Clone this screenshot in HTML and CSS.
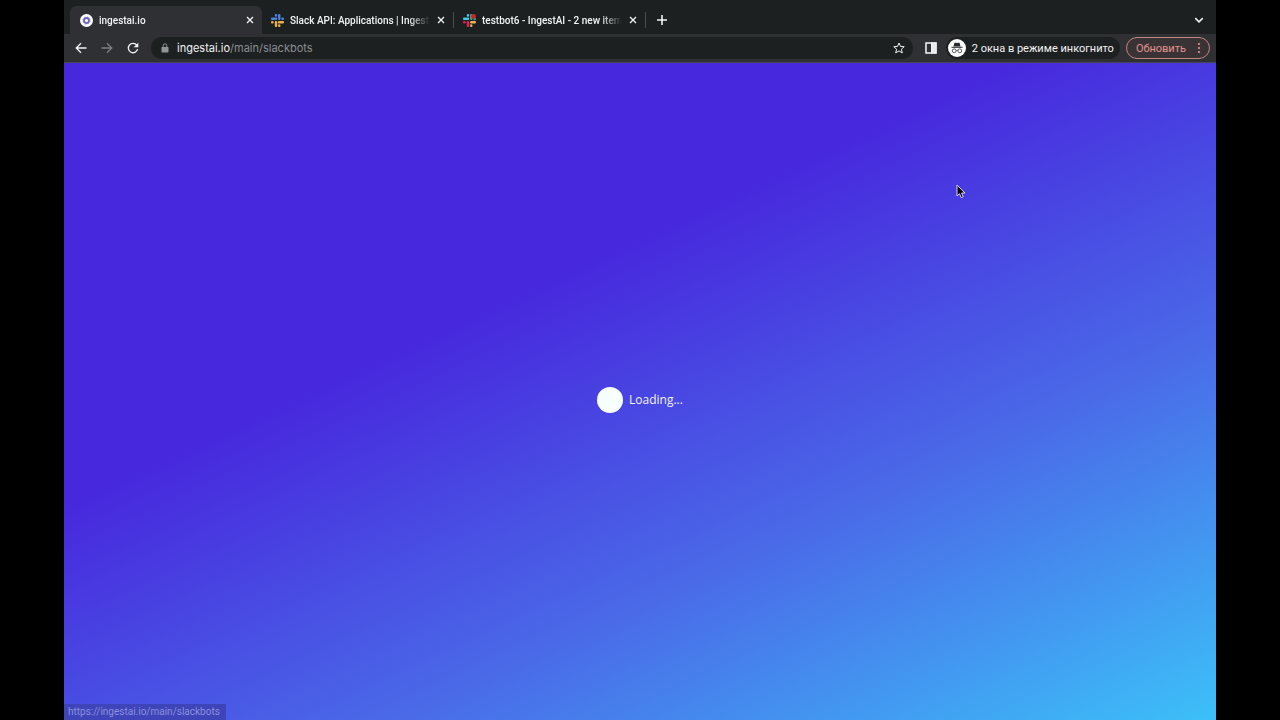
FILE: index.html
```
<!DOCTYPE html>
<html lang="en">
<head>
  <meta charset="UTF-8">
  <meta name="viewport" content="width=device-width, initial-scale=1.0">
  <title>ingestai.io</title>
  <link rel="stylesheet" href="styles.css">
</head>
<body>
  <div class="browser">
    <header class="tab-strip">
      <nav class="tabs">
        <div class="tab active">
          <svg class="favicon" viewBox="0 0 12 12">
            <circle cx="6" cy="6" r="6" fill="#fff"/>
            <circle cx="6" cy="6" r="2.3" fill="none" stroke="#7566bd" stroke-width="1.8"/>
            <circle cx="6" cy="6" r="3.4" fill="none" stroke="#8d80cc" stroke-width=".8" stroke-dasharray="1.3 1.37"/>
          </svg>
          <a class="tab-title" href="#">ingestai.io</a>
          <button class="close" aria-label="Close tab">
            <svg viewBox="0 0 8 8"><path d="M1 1l6 6M7 1L1 7"/></svg>
          </button>
        </div>
        <div class="tab">
          <svg class="favicon" viewBox="0 0 24 24">
            <g fill="#4a84e0">
              <rect x="7" y="0" width="4.500" height="5" rx="2"/>
              <rect x="0" y="6.500" width="11.500" height="4.500" rx="2"/>
              <rect x="13" y="0" width="4.500" height="11" rx="2"/>
              <rect x="19" y="6.500" width="5" height="4.500" rx="2"/>
            </g>
            <g fill="#ecb04a">
              <rect x="12.500" y="13" width="11.500" height="4.500" rx="2"/>
              <rect x="13" y="19" width="4.500" height="5" rx="2"/>
              <rect x="7" y="13" width="4.500" height="11" rx="2"/>
              <rect x="0" y="13" width="5" height="4.500" rx="2"/>
            </g>
          </svg>
          <a class="tab-title" href="#">Slack API: Applications | Ingest</a>
          <button class="close" aria-label="Close tab">
            <svg viewBox="0 0 8 8"><path d="M1 1l6 6M7 1L1 7"/></svg>
          </button>
        </div>
        <div class="tab">
          <svg class="favicon" viewBox="0 0 24 24">
            <g fill="#4cc4e8">
              <rect x="7" y="0" width="4.500" height="5" rx="2"/>
              <rect x="0" y="6.500" width="11.500" height="4.500" rx="2"/>
            </g>
            <g fill="#3aa67c">
              <rect x="13" y="0" width="4.500" height="11" rx="2"/>
              <rect x="19" y="7" width="5" height="4.500" rx="2"/>
            </g>
            <g fill="#e0245c">
              <rect x="7" y="13" width="4.500" height="11" rx="2"/>
              <rect x="0" y="13" width="5" height="4.500" rx="2"/>
            </g>
            <g fill="#ecb04a">
              <rect x="13" y="13" width="11" height="4.500" rx="2"/>
              <rect x="13" y="19" width="4.500" height="5" rx="2"/>
            </g>
            <circle cx="19.500" cy="4.500" r="4.500" fill="#d0222c"/>
          </svg>
          <a class="tab-title" href="#">testbot6 - IngestAI - 2 new item</a>
          <button class="close" aria-label="Close tab">
            <svg viewBox="0 0 8 8"><path d="M1 1l6 6M7 1L1 7"/></svg>
          </button>
        </div>
      </nav>
      <button class="new-tab" aria-label="New tab">
        <svg viewBox="0 0 10 10"><path d="M5 0v10M0 5h10"/></svg>
      </button>
      <button class="tab-search" aria-label="Search tabs">
        <svg viewBox="0 0 8 8"><path d="M1 2.500l3 3 3-3"/></svg>
      </button>
    </header>

    <div class="toolbar">
      <div class="nav-buttons">
        <button aria-label="Back">
          <svg viewBox="0 0 12 12"><path d="M11.500 6H1.500M6 1.200L1.200 6 6 10.800"/></svg>
        </button>
        <button aria-label="Forward" class="muted">
          <svg viewBox="0 0 12 12"><path d="M.5 6h10M6 1.200L10.800 6 6 10.800"/></svg>
        </button>
        <button aria-label="Reload">
          <svg viewBox="0 0 12 12">
            <path d="M9.800 3.200A4.700 4.700 0 1 0 10.600 7.200"/>
            <path d="M11.300.7v4.600H6.700z" class="solid"/>
          </svg>
        </button>
      </div>
      <form class="omnibox">
        <svg class="lock" viewBox="0 0 8 10">
          <rect x=".5" y="4" width="7" height="5.500" rx=".8" fill="#929598"/>
          <path d="M2.200 4.200V2.600a1.800 1.800 0 0 1 3.600 0v1.600" fill="none" stroke="#929598"/>
        </svg>
        <label class="host" for="address">ingestai.io</label>
        <input class="path" id="address" type="text" value="/main/slackbots">
        <button type="button" class="star" aria-label="Bookmark">
          <svg viewBox="0 0 12 12"><path d="M6 1l1.500 3.400 3.700.3-2.800 2.500.9 3.700L6 8.900l-3.300 2 .9-3.700L.8 4.700l3.700-.3z"/></svg>
        </button>
      </form>
      <button class="side-panel" aria-label="Side panel">
        <svg viewBox="0 0 12 12">
          <rect x="1" y="1" width="10" height="10" fill="none" stroke="#e8eaf0" stroke-width="1.600"/>
          <rect x="6.500" y="1" width="4.500" height="10" fill="#e8eaf0"/>
        </svg>
      </button>
      <button class="incognito">
        <svg viewBox="0 0 18 18">
          <circle cx="9" cy="9" r="9" fill="#fff"/>
          <path d="M6.400 4.200q.3-.8 1.100-.5l1.500.4 1.500-.4q.8-.3 1.100.5l1 3.200H5.400z" fill="#26292c"/>
          <path d="M3.500 8.300h11" stroke="#26292c"/>
          <g fill="none" stroke="#44474a" stroke-width=".9">
            <circle cx="6.200" cy="11.800" r="1.900"/>
            <circle cx="11.800" cy="11.800" r="1.900"/>
            <path d="M8.100 11.500q.9-.6 1.800 0"/>
          </g>
        </svg>
        <span>2 окна в режиме инкогнито</span>
      </button>
      <button class="update">
        <span>Обновить</span>
        <svg viewBox="0 0 4 12">
          <circle cx="2" cy="2" r="1.100"/>
          <circle cx="2" cy="6" r="1.100"/>
          <circle cx="2" cy="10" r="1.100"/>
        </svg>
      </button>
    </div>

    <main class="page">
      <div class="loader" role="status">
        <span class="dot"></span>
        <span>Loading...</span>
      </div>
      <div class="status-url">https://ingestai.io/main/slackbots</div>
      <svg class="cursor" viewBox="0 0 10 15">
        <path d="M1 1v11l2.500-2.300L5.200 13.600l2-.9L5.600 9H9z" fill="#08080c" stroke="#e8e6ff" stroke-width=".9"/>
      </svg>
    </main>
  </div>
</body>
</html>
```
FILE: styles.css
```
* {
  box-sizing: border-box;
}

body {
  margin: 0;
  padding: 0 5%;
  background: #000;
  color: #f1f3f4;
  font-family: Roboto, "Noto Sans", sans-serif;
  font-size: 11px;
}

.browser {
  min-height: 100vh;
  display: flex;
  flex-direction: column;
  background: #1d2021;
}

button {
  display: flex;
  align-items: center;
  justify-content: center;
  padding: 0;
  border: none;
  background: transparent;
  color: inherit;
  font: inherit;
  cursor: pointer;
}

button svg {
  fill: none;
  stroke: currentColor;
}

/* Tabs */
.tab-strip {
  display: flex;
  align-items: center;
  padding: 6px 12px 0 6px;
}

.tabs {
  display: flex;
}

.tab {
  width: 192px;
  height: 28px;
  display: flex;
  align-items: center;
  padding: 0 4px 0 9px;
}

.tab + .tab {
  border-right: 1px solid;
  border-image: linear-gradient(transparent 25%, #4b4e51 25%, #4b4e51 75%, transparent 75%) 1;
}

.tab.active {
  padding-left: 10px;
  background: #2e3034;
  border-radius: 6px 6px 0 0;
}

.favicon {
  width: 13px;
  height: 13px;
  flex: none;
}

.tab-title {
  flex: 1;
  margin-left: 6px;
  overflow: hidden;
  white-space: nowrap;
  color: inherit;
  font-size: 10px;
  font-weight: 500;
  text-decoration: none;
  mask-image: linear-gradient(to right, #000 85%, transparent);
}

.close {
  width: 16px;
  height: 16px;
  margin-left: 3px;
}

.close svg {
  width: 8px;
  height: 8px;
  stroke-width: 1.3;
}

.new-tab {
  width: 20px;
  height: 20px;
  margin-left: 6px;
}

.new-tab svg {
  width: 10px;
  height: 10px;
  stroke-width: 1.6;
}

.tab-search {
  margin-left: auto;
}

.tab-search svg {
  width: 10px;
  height: 10px;
  stroke-width: 1.2;
}

/* Toolbar */
.toolbar {
  height: 29px;
  display: flex;
  align-items: center;
  padding: 0 6px 0 11px;
  background: #2e3034;
  border-bottom: 1px solid #45464f;
}

.nav-buttons {
  display: flex;
  gap: 14px;
}

.nav-buttons svg {
  width: 12px;
  height: 12px;
  stroke-width: 1.3;
}

.nav-buttons .solid {
  fill: currentColor;
  stroke: none;
}

.nav-buttons .muted {
  color: #7c7f82;
}

.omnibox {
  flex: 1;
  height: 22px;
  display: flex;
  align-items: center;
  margin-left: 12px;
  padding: 0 8px 0 10px;
  border-radius: 11px;
  background: #1d2021;
  font-family: Inter, sans-serif;
  font-size: 11px;
}

.lock {
  width: 8px;
  height: 10px;
  margin-right: 8px;
}

.path {
  flex: 1;
  min-width: 0;
  padding: 0;
  border: none;
  outline: none;
  background: transparent;
  color: #8b8e91;
  font: inherit;
}

.star svg {
  width: 12px;
  height: 12px;
}

.side-panel {
  margin: 0 9px 0 12px;
}

.side-panel svg {
  width: 12px;
  height: 12px;
}

.incognito {
  height: 22px;
  gap: 6px;
  padding: 0 6px 0 2px;
  border-radius: 11px;
  background: #1d2021;
  white-space: nowrap;
}

.incognito svg {
  width: 18px;
  height: 18px;
  stroke: none;
}

.update {
  height: 22px;
  gap: 11px;
  margin-left: 6px;
  padding: 0 8px 0 9px;
  border: 1px solid #c48582;
  border-radius: 11px;
  background: #3a3335;
  color: #e09390;
}

.update svg {
  width: 4px;
  height: 12px;
  fill: currentColor;
  stroke: none;
}

/* Page */
.page {
  position: relative;
  flex: 1;
  display: flex;
  align-items: center;
  justify-content: center;
  padding-top: 16px;
  background: linear-gradient(155deg, #4728dd 37%, #4a6ae8 68%, #3cc0f8);
}

.loader {
  display: flex;
  align-items: center;
  gap: 6px;
  font-family: "Open Sans", sans-serif;
  font-size: 12px;
}

.dot {
  width: 26px;
  height: 26px;
  border-radius: 50%;
  background: #f8ffff;
}

.status-url {
  position: absolute;
  left: 0;
  bottom: 0;
  padding: 1px 6px 1px 4px;
  background: #3f44b8;
  color: #8a90e0;
  font-size: 10px;
  line-height: 14px;
}

.cursor {
  position: absolute;
  left: 892px;
  top: 121px;
  width: 10px;
  height: 15px;
}
```
